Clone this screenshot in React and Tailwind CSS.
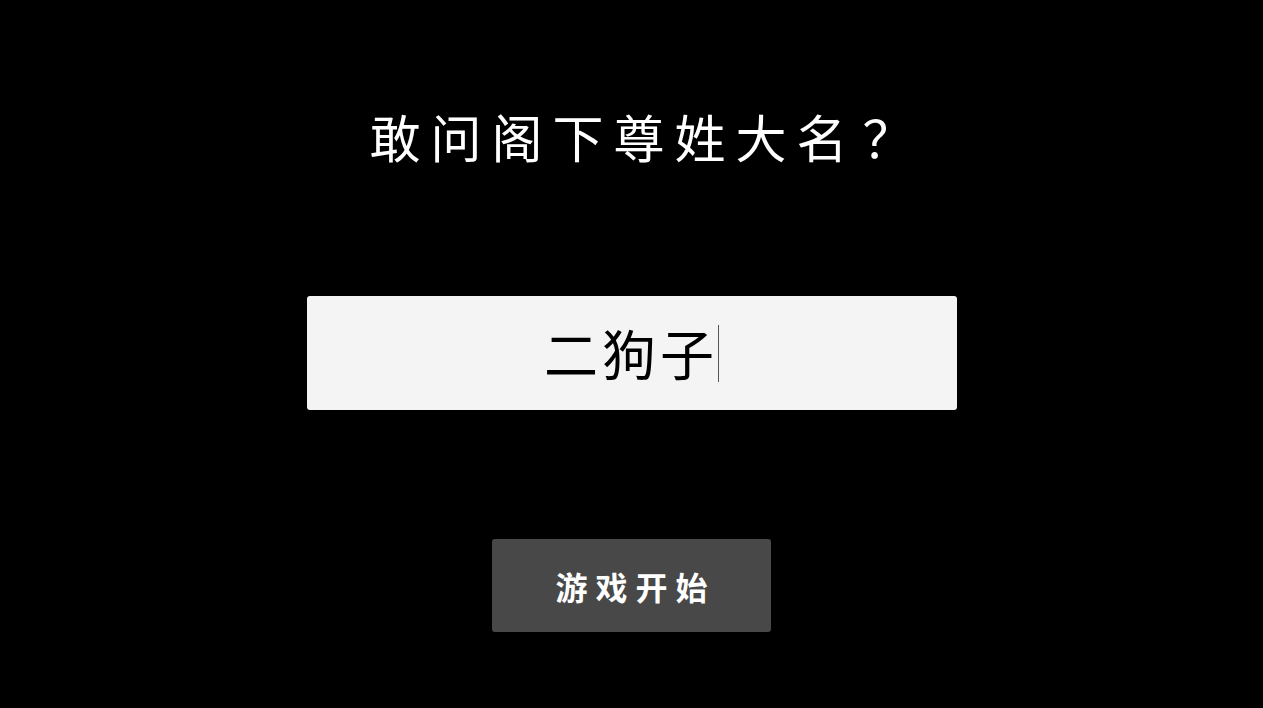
export default function App() {
  return (
    <div
      className="w-full h-[708px] bg-black flex flex-col items-center"
      style={{ fontFamily: '"Noto Sans CJK SC", "Noto Sans", sans-serif' }}
    >
      <h1 className="mt-[107px] h-[58px] flex items-center text-white text-[51px] leading-none tracking-[10px] pl-[30px]">
        敢问阁下尊姓大名<span className="ml-[5px]">？</span>
      </h1>

      <div className="mt-[131px] w-[650px] h-[114px] bg-[#f4f4f4] rounded-[3px] flex items-center justify-center">
        <span className="text-black text-[54px] leading-none tracking-[4px]">二狗子</span>
        <span className="w-px h-[57px] bg-[#555]" />
      </div>

      <button className="mt-[129px] w-[279px] h-[93px] bg-[#484848] rounded-[3px] flex items-center justify-center text-white text-[32px] font-bold tracking-[8px] pl-[8px]">
        游戏开始
      </button>
    </div>
  )
}
